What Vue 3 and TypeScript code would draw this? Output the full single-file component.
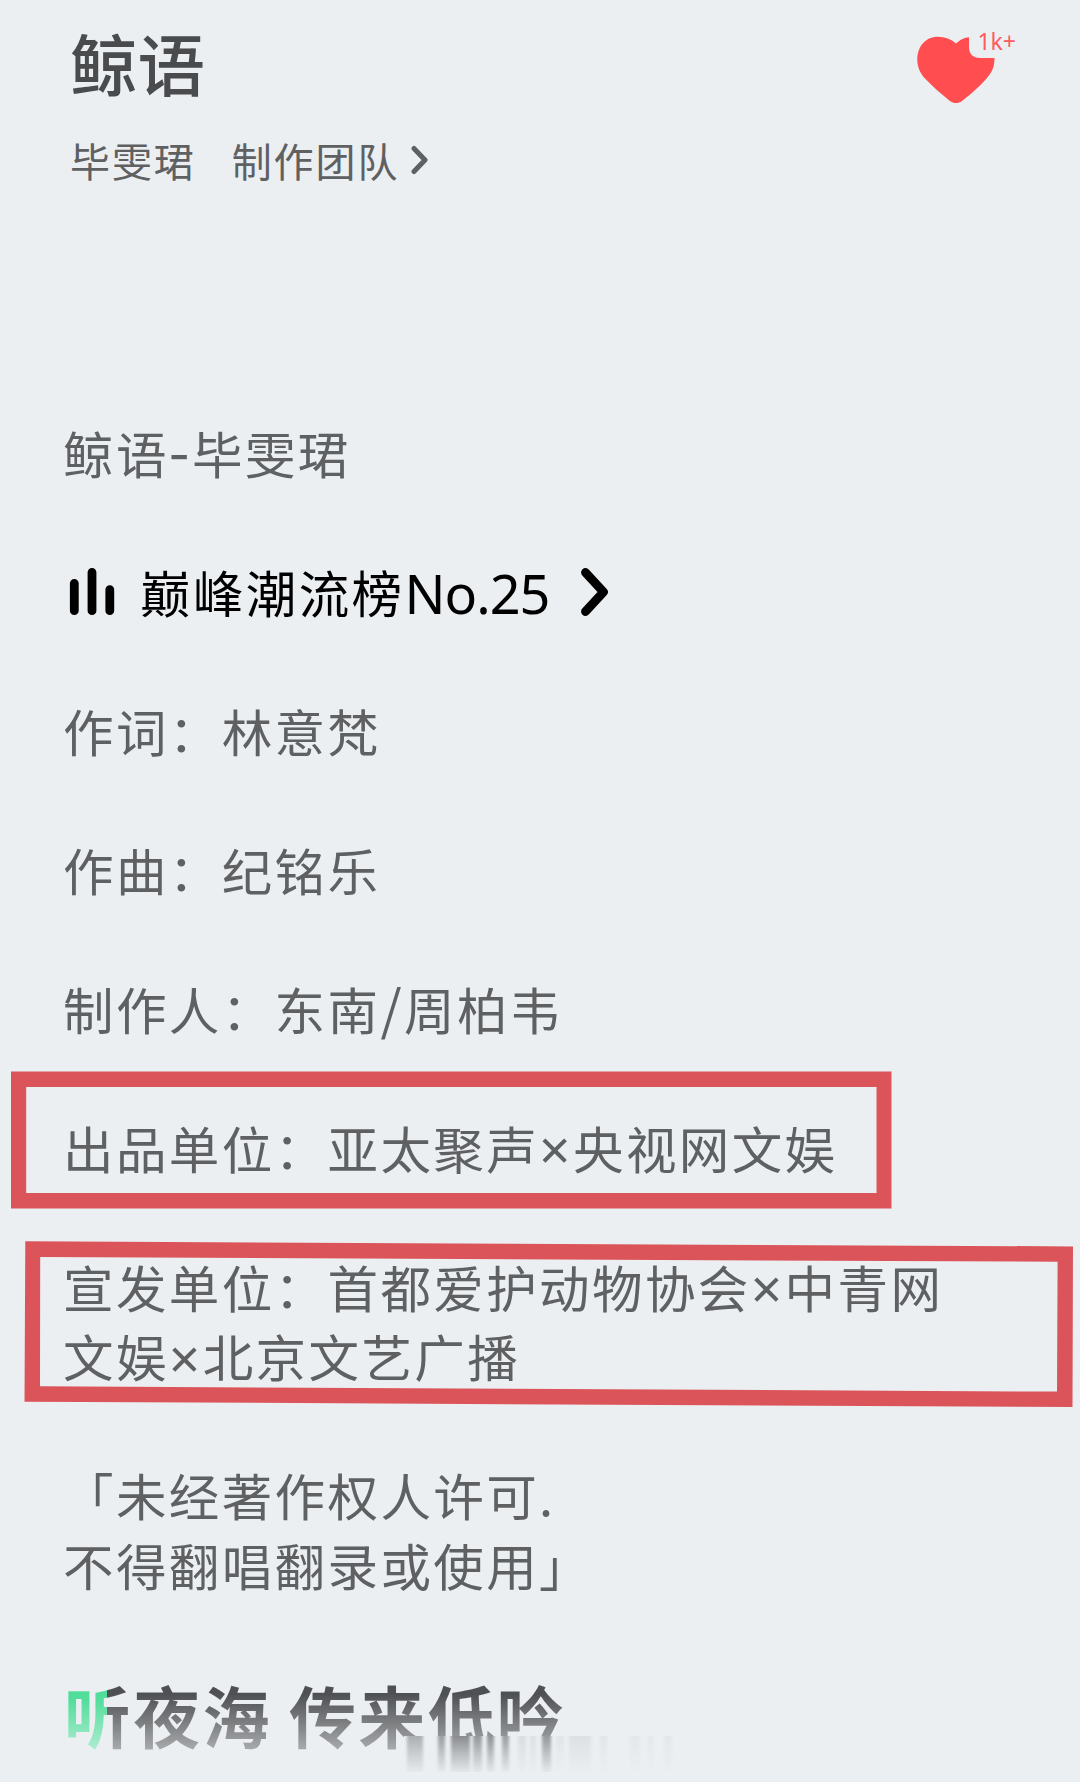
<script setup lang="ts">
interface Part {
  text: string
  kind: string
}

// Symbols get their own size so they sit well between the full-width characters
const symbolClass: Record<string, string> = { '×': 'times', '-': 'hyphen', '/': 'slash' }

function split(line: string): Part[] {
  return line
    .split(/([×\-/])/)
    .filter(Boolean)
    .map((text) => ({ text, kind: symbolClass[text] ?? 'han' }))
}

const intro: Part[][] = [split('鲸语-毕雯珺')]

const credits: Part[][][] = [
  ['作词：林意梵'],
  ['作曲：纪铭乐'],
  ['制作人：东南/周柏韦'],
  ['出品单位：亚太聚声×央视网文娱'],
  ['宣发单位：首都爱护动物协会×中青网', '文娱×北京文艺广播'],
  ['「未经著作权人许可.', '不得翻唱翻录或使用」'],
].map((lines) => lines.map(split))

// Vertical streaks that trail below the fading lyric: x, width, strength
const streaks: [number, number, number][] = [
  [407, 16, 0.55], [438, 7, 0.7], [451, 19, 0.85],
  [473, 9, 0.75], [487, 7, 0.8], [502, 7, 0.7], [518, 8, 0.15],
  [530, 6, 0.12], [542, 9, 0.75], [556, 8, 0.08], [569, 22, 0.12],
  [600, 7, 0.08], [630, 10, 0.06], [648, 5, 0.06], [664, 8, 0.06],
]
</script>

<template>
  <main class="page">
    <header class="head">
      <div class="titles">
        <h1 class="title">鲸语</h1>
        <div class="sub">
          <span class="artist">毕雯珺</span>
          <span>制作团队</span>
          <svg class="sub-arrow" width="18" height="30" viewBox="0 0 18 30">
            <path d="M3 3.5 L14 15 L3 26.5" />
          </svg>
        </div>
      </div>
      <div class="like">
        <svg width="80" height="68" viewBox="0 0 80 68">
          <path
            d="M53 1.2 C47 1.8 43 4.5 40 7.5 C35 3 29 0.7 22 0.7 C9 0.7 1.3 11 1.3 23.5 C1.3 31 4 37 9 42.5 C16 50 26 58.5 34 65 C38 67.8 42 67.8 46 65 C54 59 64 50 71 42 C76 36 78.5 31 78.5 22 L64 22 C57 22 53 18 53 11 Z"
          />
        </svg>
        <span class="count">1k+</span>
      </div>
    </header>

    <section class="lyrics">
      <p class="para">
        <span v-for="(line, j) in intro" :key="j" class="line"><span v-for="(p, k) in line" :key="k" :class="p.kind">{{ p.text }}</span></span>
      </p>
      <div class="para rank">
        <svg class="bars" width="46" height="52" viewBox="0 -2 46 52">
          <path d="M5.3 16.3 V43.7 M23 5.3 V43.7 M40.8 22.6 V43.7" />
        </svg>
        <span class="rank-text">巅峰潮流榜<span class="no">No.25</span></span>
        <svg class="rank-arrow" width="30" height="52" viewBox="0 -2 30 52">
          <path d="M5.5 5.5 L23.5 25 L5.5 44.5" />
        </svg>
      </div>
      <p v-for="(lines, i) in credits" :key="i" class="para">
        <span v-for="(line, j) in lines" :key="j" class="line"><span v-for="(p, k) in line" :key="k" :class="p.kind">{{ p.text }}</span></span>
      </p>
      <p class="current">听夜海 传来低吟</p>
    </section>

    <svg class="overlay" width="1080" height="1782" viewBox="0 0 1080 1782">
      <defs>
        <linearGradient id="streak" x1="0" y1="0" x2="0" y2="1">
          <stop offset="0" stop-color="#77797b" />
          <stop offset="0.5" stop-color="#77797b" stop-opacity="0.5" />
          <stop offset="1" stop-color="#77797b" stop-opacity="0.08" />
        </linearGradient>
        <filter id="soft" x="-50%" y="-10%" width="200%" height="120%">
          <feGaussianBlur stdDeviation="1.5 0.5" />
        </filter>
      </defs>
      <path
        class="mark"
        d="M11 1071.5 H891.5 V1208.5 H11 Z M26.2 1087 V1193 H876.5 V1087 Z"
      />
      <path
        class="mark"
        d="M25.3 1241.3 L1073 1246.4 L1072.5 1407 L24.5 1401.7 Z M40.2 1257 L40 1386.3 L1057 1391.6 L1057.6 1261.8 Z"
      />
      <rect class="fade" x="404" y="1736" width="290" height="46" />
      <rect
        v-for="s in streaks"
        :key="s[0]"
        :x="s[0]"
        y="1736"
        :width="s[1]"
        height="36"
        :opacity="s[2]"
        fill="url(#streak)"
        filter="url(#soft)"
      />
    </svg>
  </main>
</template>

<style>
body {
  margin: 0;
  background: #ebeff2;
}
</style>

<style scoped>
.page {
  position: relative;
  box-sizing: border-box;
  width: 1080px;
  height: 1782px;
  overflow: hidden;
  background: #ebeff2;
  color: #5f6062;
  font-family: "Noto Sans CJK SC", sans-serif;
}
.head {
  display: flex;
  justify-content: space-between;
  height: 417.5px;
  padding: 0 64px 0 70px;
}
.title {
  margin: 12px 0 0;
  color: #4a4b4d;
  font-size: 67.5px;
  font-weight: 500;
  line-height: 100px;
}
.sub {
  display: flex;
  align-items: center;
  height: 60px;
  margin-top: 18px;
  font-size: 40px;
  letter-spacing: 1.9px;
}
.artist {
  margin-right: 36px;
}
.sub-arrow {
  margin-left: 12px;
}
.sub-arrow path,
.bars path,
.rank-arrow path {
  fill: none;
  stroke: #5f6062;
  stroke-width: 5;
  stroke-linecap: round;
  stroke-linejoin: round;
}
.like {
  display: flex;
  align-items: flex-start;
  padding-top: 36px;
  fill: #ff4d50;
}
.count {
  margin: -12px 0 0 -18.5px;
  color: #ff5a5e;
  font-family: "Noto Sans", sans-serif;
  font-size: 23px;
  line-height: 34px;
}
.lyrics {
  padding-left: 63px;
  font-size: 50.5px;
  letter-spacing: 2.4px;
}
.para {
  margin: 0 0 69.5px;
  line-height: 69.5px;
}
.line {
  display: block;
  height: 69.5px;
  white-space: pre;
}
.times,
.slash,
.hyphen {
  line-height: 0;
}
.times {
  position: relative;
  top: 1.5px;
  font-family: "Noto Sans", sans-serif;
  font-size: 55px;
}
.slash {
  font-size: 54px;
}
.hyphen {
  font-size: 60px;
}
.rank {
  display: flex;
  align-items: center;
  height: 69.5px;
  color: #000;
}
.bars {
  margin: 0 25px 0 6px;
}
.bars path,
.rank-arrow path {
  stroke: #000;
  stroke-width: 8.8;
}
.rank-text {
  width: 440px;
  white-space: nowrap;
}
.no {
  position: relative;
  top: 1px;
  font-family: "Noto Sans", sans-serif;
  font-size: 54px;
  letter-spacing: -1px;
  line-height: 0;
}
.current {
  width: max-content;
  margin: -5px 0 0 1px;
  background:
    linear-gradient(#52dd9b 35%, #a6ebcc 82%) 0 0 / 43px 100% no-repeat,
    linear-gradient(#4f5053 30%, #a5a7a9 84%) 43px 0 / 600px 100% no-repeat;
  background-clip: text;
  color: transparent;
  font-size: 67px;
  font-weight: 700;
  letter-spacing: 2.2px;
  line-height: 100px;
}
.overlay {
  position: absolute;
  inset: 0;
  pointer-events: none;
}
.mark {
  fill: #db5459;
  fill-rule: evenodd;
}
.fade {
  fill: #ebeff2;
}
</style>
